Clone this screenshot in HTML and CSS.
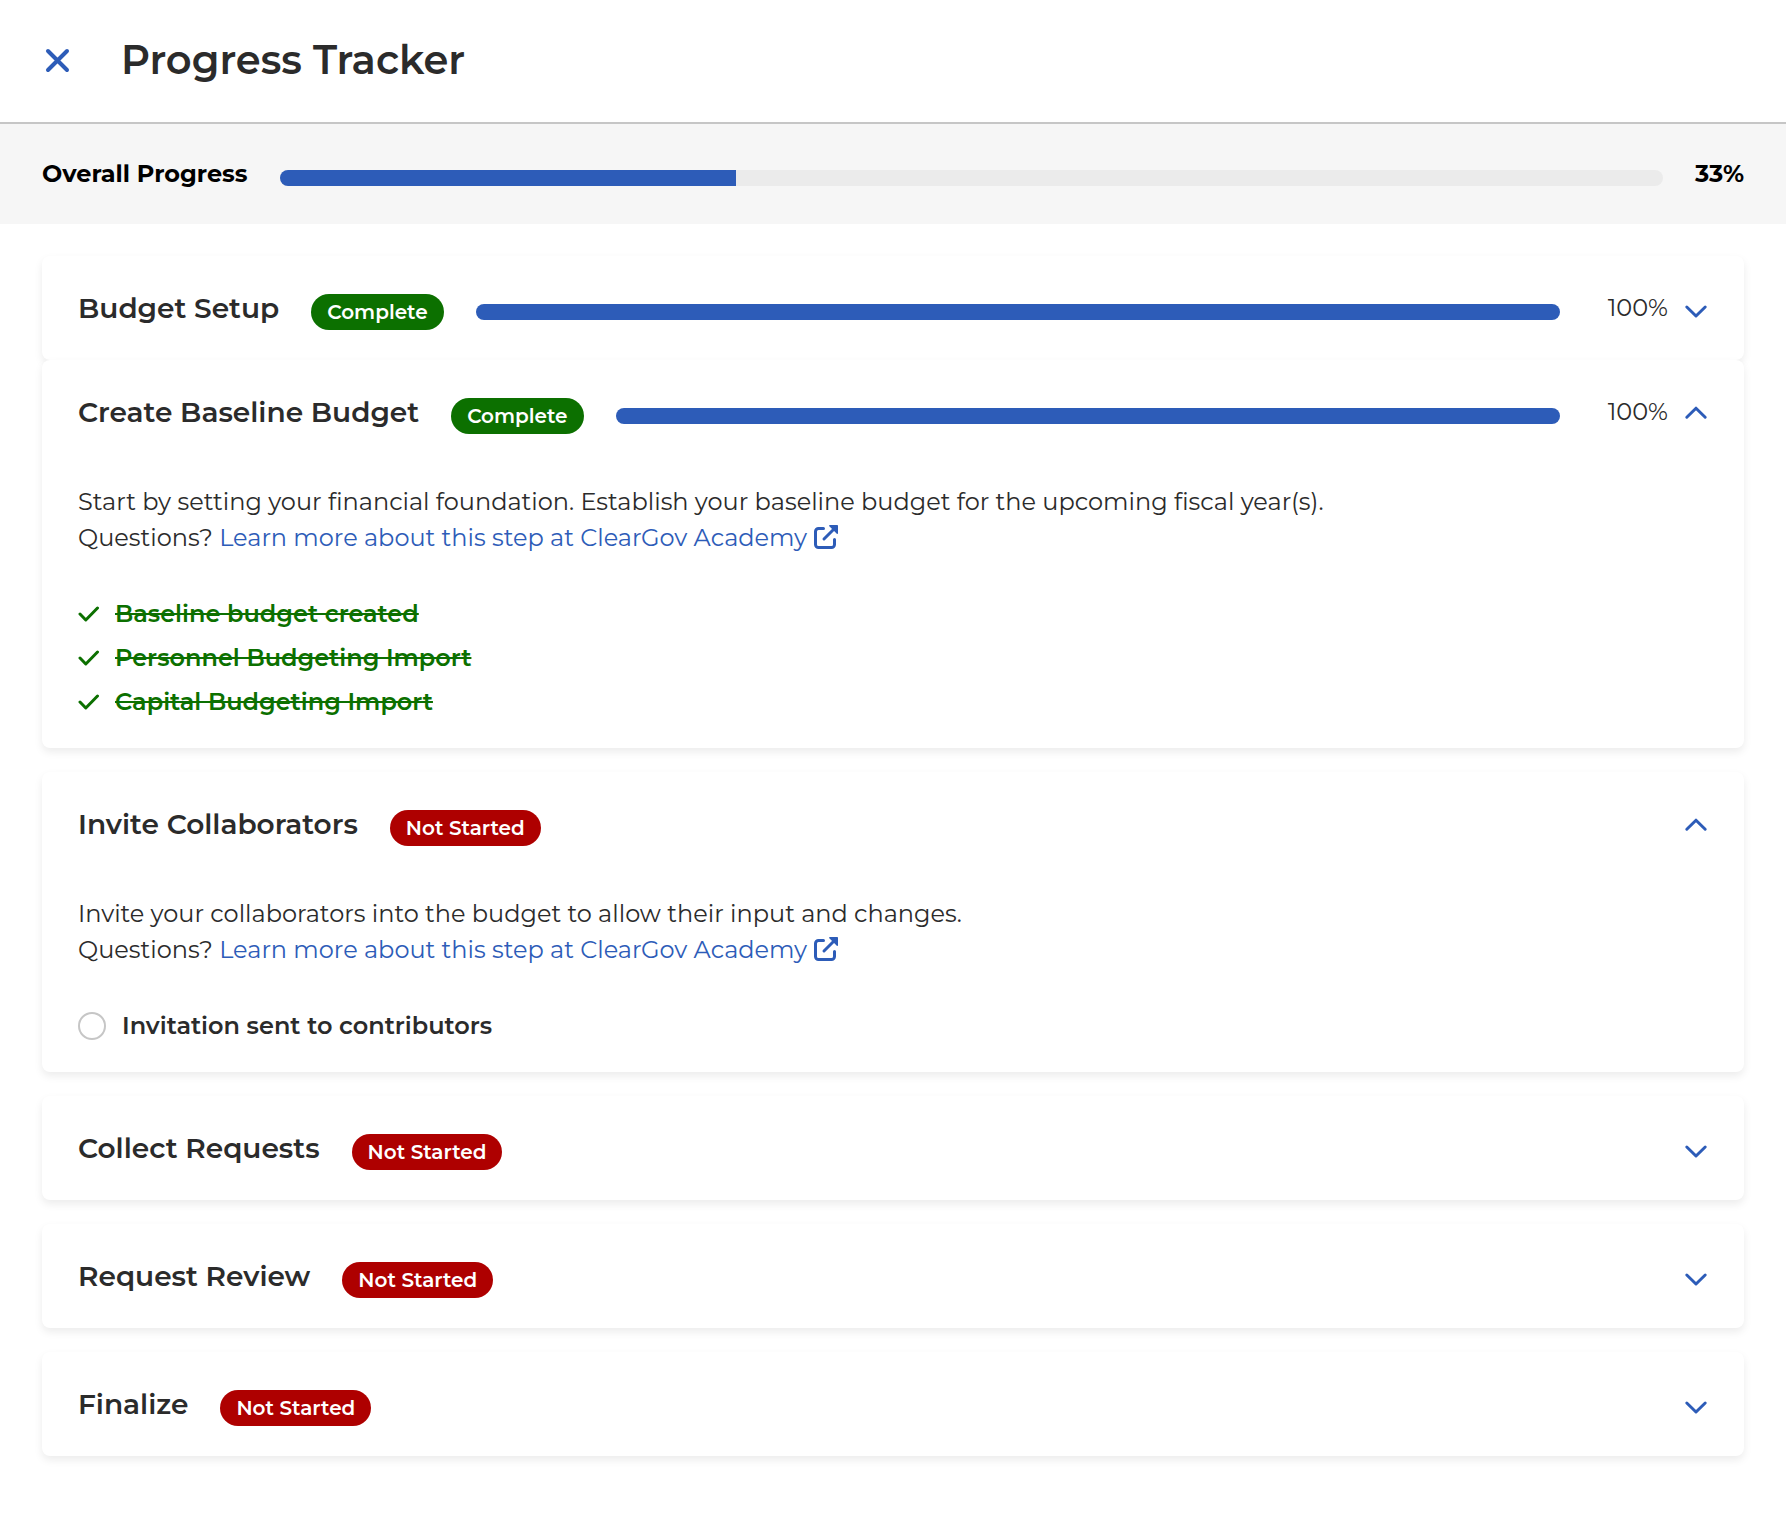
FILE: index.html
```
<!DOCTYPE html>
<html lang="en">
<head>
    <meta charset="UTF-8">
    <meta name="viewport" content="width=device-width, initial-scale=1.0">
    <title>Progress Tracker</title>
    <link rel="stylesheet" href="styles.css">
</head>
<body>
    <!-- Shared icons -->
    <svg class="icon-defs" aria-hidden="true">
        <symbol id="icon-down" viewBox="0 0 24 24">
            <path d="M2.8 11 12 20l9.2-9"/>
        </symbol>
        <symbol id="icon-up" viewBox="0 0 24 24">
            <path d="M2.8 17.2 12 8.2l9.2 9"/>
        </symbol>
        <symbol id="icon-check" viewBox="0 0 24 24">
            <path d="M2 12 7.8 18 19.5 6"/>
        </symbol>
        <symbol id="icon-external" viewBox="0 0 24 24">
            <path d="M9.5 3.5H4.5A3 3 0 0 0 1.5 6.5v13a3 3 0 0 0 3 3h13a3 3 0 0 0 3-3v-5M10 14 20 4"/>
            <path class="arrow-head" d="M15.8 0h7.400a.8.8 0 0 1 .8.8v7.400a.7.7 0 0 1-1.200.5L15.300 1.200A.7.7 0 0 1 15.800 0z"/>
        </symbol>
    </svg>

    <header class="page-header">
        <button class="icon-button close-button" aria-label="Close">
            <svg class="close-icon" viewBox="0 0 26 26"><path d="M4 4l19 19M23 4l-19 19"/></svg>
        </button>
        <h1>Progress Tracker</h1>
    </header>

    <section class="overall">
        <span class="overall-label" id="overallLabel">Overall Progress</span>
        <div class="progress" role="progressbar" aria-labelledby="overallLabel" aria-valuenow="33" aria-valuemin="0" aria-valuemax="100">
            <div class="progress-fill" style="width: 33%"></div>
        </div>
        <span class="overall-value">33%</span>
    </section>

    <main class="steps">
        <section class="card joined">
            <div class="card-header">
                <h2>Budget Setup</h2>
                <span class="badge complete">Complete</span>
                <div class="progress" role="progressbar" aria-label="Budget Setup" aria-valuenow="100" aria-valuemin="0" aria-valuemax="100">
                    <div class="progress-fill" style="width: 100%"></div>
                </div>
                <span class="percent">100%</span>
                <button class="icon-button toggle" aria-label="Budget Setup" aria-expanded="false">
                    <svg class="chevron"><use href="#icon-down"/></svg>
                </button>
            </div>
        </section>

        <section class="card">
            <div class="card-header">
                <h2>Create Baseline Budget</h2>
                <span class="badge complete">Complete</span>
                <div class="progress" role="progressbar" aria-label="Create Baseline Budget" aria-valuenow="100" aria-valuemin="0" aria-valuemax="100">
                    <div class="progress-fill" style="width: 100%"></div>
                </div>
                <span class="percent">100%</span>
                <button class="icon-button toggle" aria-label="Create Baseline Budget" aria-expanded="true">
                    <svg class="chevron"><use href="#icon-up"/></svg>
                </button>
            </div>
            <div class="card-body">
                <p>Start by setting your financial foundation. Establish your baseline budget for the upcoming fiscal year(s).</p>
                <p>Questions? <a href="#">Learn more about this step at ClearGov Academy<svg class="external"><use href="#icon-external"/></svg></a></p>
                <ul class="tasks">
                    <li class="done"><svg class="check"><use href="#icon-check"/></svg><s>Baseline budget created</s></li>
                    <li class="done"><svg class="check"><use href="#icon-check"/></svg><s>Personnel Budgeting Import</s></li>
                    <li class="done"><svg class="check"><use href="#icon-check"/></svg><s>Capital Budgeting Import</s></li>
                </ul>
            </div>
        </section>

        <section class="card">
            <div class="card-header">
                <h2>Invite Collaborators</h2>
                <span class="badge not-started">Not Started</span>
                <button class="icon-button toggle" aria-label="Invite Collaborators" aria-expanded="true">
                    <svg class="chevron"><use href="#icon-up"/></svg>
                </button>
            </div>
            <div class="card-body">
                <p>Invite your collaborators into the budget to allow their input and changes.</p>
                <p>Questions? <a href="#">Learn more about this step at ClearGov Academy<svg class="external"><use href="#icon-external"/></svg></a></p>
                <ul class="tasks">
                    <li>
                        <input type="checkbox" id="invitationSent">
                        <label for="invitationSent">Invitation sent to contributors</label>
                    </li>
                </ul>
            </div>
        </section>

        <section class="card">
            <div class="card-header">
                <h2>Collect Requests</h2>
                <span class="badge not-started">Not Started</span>
                <button class="icon-button toggle" aria-label="Collect Requests" aria-expanded="false">
                    <svg class="chevron"><use href="#icon-down"/></svg>
                </button>
            </div>
        </section>

        <section class="card">
            <div class="card-header">
                <h2>Request Review</h2>
                <span class="badge not-started">Not Started</span>
                <button class="icon-button toggle" aria-label="Request Review" aria-expanded="false">
                    <svg class="chevron"><use href="#icon-down"/></svg>
                </button>
            </div>
        </section>

        <section class="card">
            <div class="card-header">
                <h2>Finalize</h2>
                <span class="badge not-started">Not Started</span>
                <button class="icon-button toggle" aria-label="Finalize" aria-expanded="false">
                    <svg class="chevron"><use href="#icon-down"/></svg>
                </button>
            </div>
        </section>
    </main>
</body>
</html>
```
FILE: styles.css
```
* {
    box-sizing: border-box;
}

body {
    margin: 0;
    background-color: #fff;
    color: #2b2b2b;
    font-family: Montserrat, Inter, sans-serif;
    font-size: 24px;
    line-height: 36px;
}

h1, h2, p, ul {
    margin: 0;
    padding: 0;
}

h1, h2 {
    font-weight: 600;
    white-space: nowrap;
}

h1 {
    font-size: 40px;
    line-height: 48px;
}

h2 {
    font-size: 28px;
}

a {
    color: #2d5cb8;
    text-decoration: none;
}

svg {
    flex: none;
    fill: none;
    stroke: currentColor;
    stroke-width: 3px;
    stroke-linecap: round;
    stroke-linejoin: round;
}

.icon-defs {
    display: none;
}

.icon-button {
    display: flex;
    padding: 0;
    border: none;
    background: none;
    color: #2d5cb8;
    cursor: pointer;
}

/* Header */
.page-header {
    display: flex;
    align-items: center;
    gap: 51px;
    padding: 36px 44px 38px;
    border-bottom: 2px solid #c6c6c6;
}

.close-icon {
    width: 26px;
    height: 26px;
    stroke-width: 4px;
}

/* Overall progress */
.overall {
    display: flex;
    align-items: center;
    gap: 32px;
    padding: 32px 42px;
    background-color: #f6f6f6;
    color: #000;
    font-weight: 700;
}

.progress {
    flex: 1;
    height: 16px;
    margin-top: 8px;
    border-radius: 8px;
    background-color: #ebebeb;
    overflow: hidden;
}

.progress-fill {
    height: 100%;
    background-color: #2d5cb8;
}

/* Step cards */
.steps {
    padding: 32px 42px 66px;
}

.card {
    margin-bottom: 24px;
    border-radius: 8px;
    background-color: #fff;
    box-shadow: 0 4px 8px rgba(0, 0, 0, 0.08);
}

.card.joined {
    margin-bottom: 0;
}

.card:last-child {
    margin-bottom: 0;
}

.card-header {
    display: flex;
    align-items: center;
    gap: 32px;
    min-height: 104px;
    padding: 0 36px;
}

.badge {
    margin-top: 8px;
    padding: 0 16px;
    border-radius: 18px;
    color: #fff;
    font-size: 20px;
    font-weight: 600;
    white-space: nowrap;
}

.badge.complete {
    background-color: #0c7000;
}

.badge.not-started {
    background-color: #ae0000;
}

.percent {
    margin-left: 16px;
}

.toggle {
    margin-left: auto;
}

.percent + .toggle {
    margin-left: -16px;
}

.chevron {
    width: 24px;
    height: 24px;
}

.card-body {
    padding: 20px 36px 24px;
}

.external {
    width: 24px;
    height: 24px;
    margin-left: 7px;
    vertical-align: -3px;
}

.arrow-head {
    fill: currentColor;
    stroke: none;
}

.tasks {
    margin-top: 36px;
    list-style: none;
}

.tasks li {
    display: flex;
    align-items: center;
    gap: 16px;
    font-weight: 600;
    line-height: 44px;
}

.tasks .done {
    gap: 13px;
    color: #0c7000;
}

.check {
    width: 24px;
    height: 24px;
}

.tasks input {
    appearance: none;
    flex: none;
    width: 28px;
    height: 28px;
    margin: 0;
    border: 2px solid #c6c6c6;
    border-radius: 50%;
    background-color: #fff;
}

.tasks input:checked {
    background-color: #0c7000;
}
```
